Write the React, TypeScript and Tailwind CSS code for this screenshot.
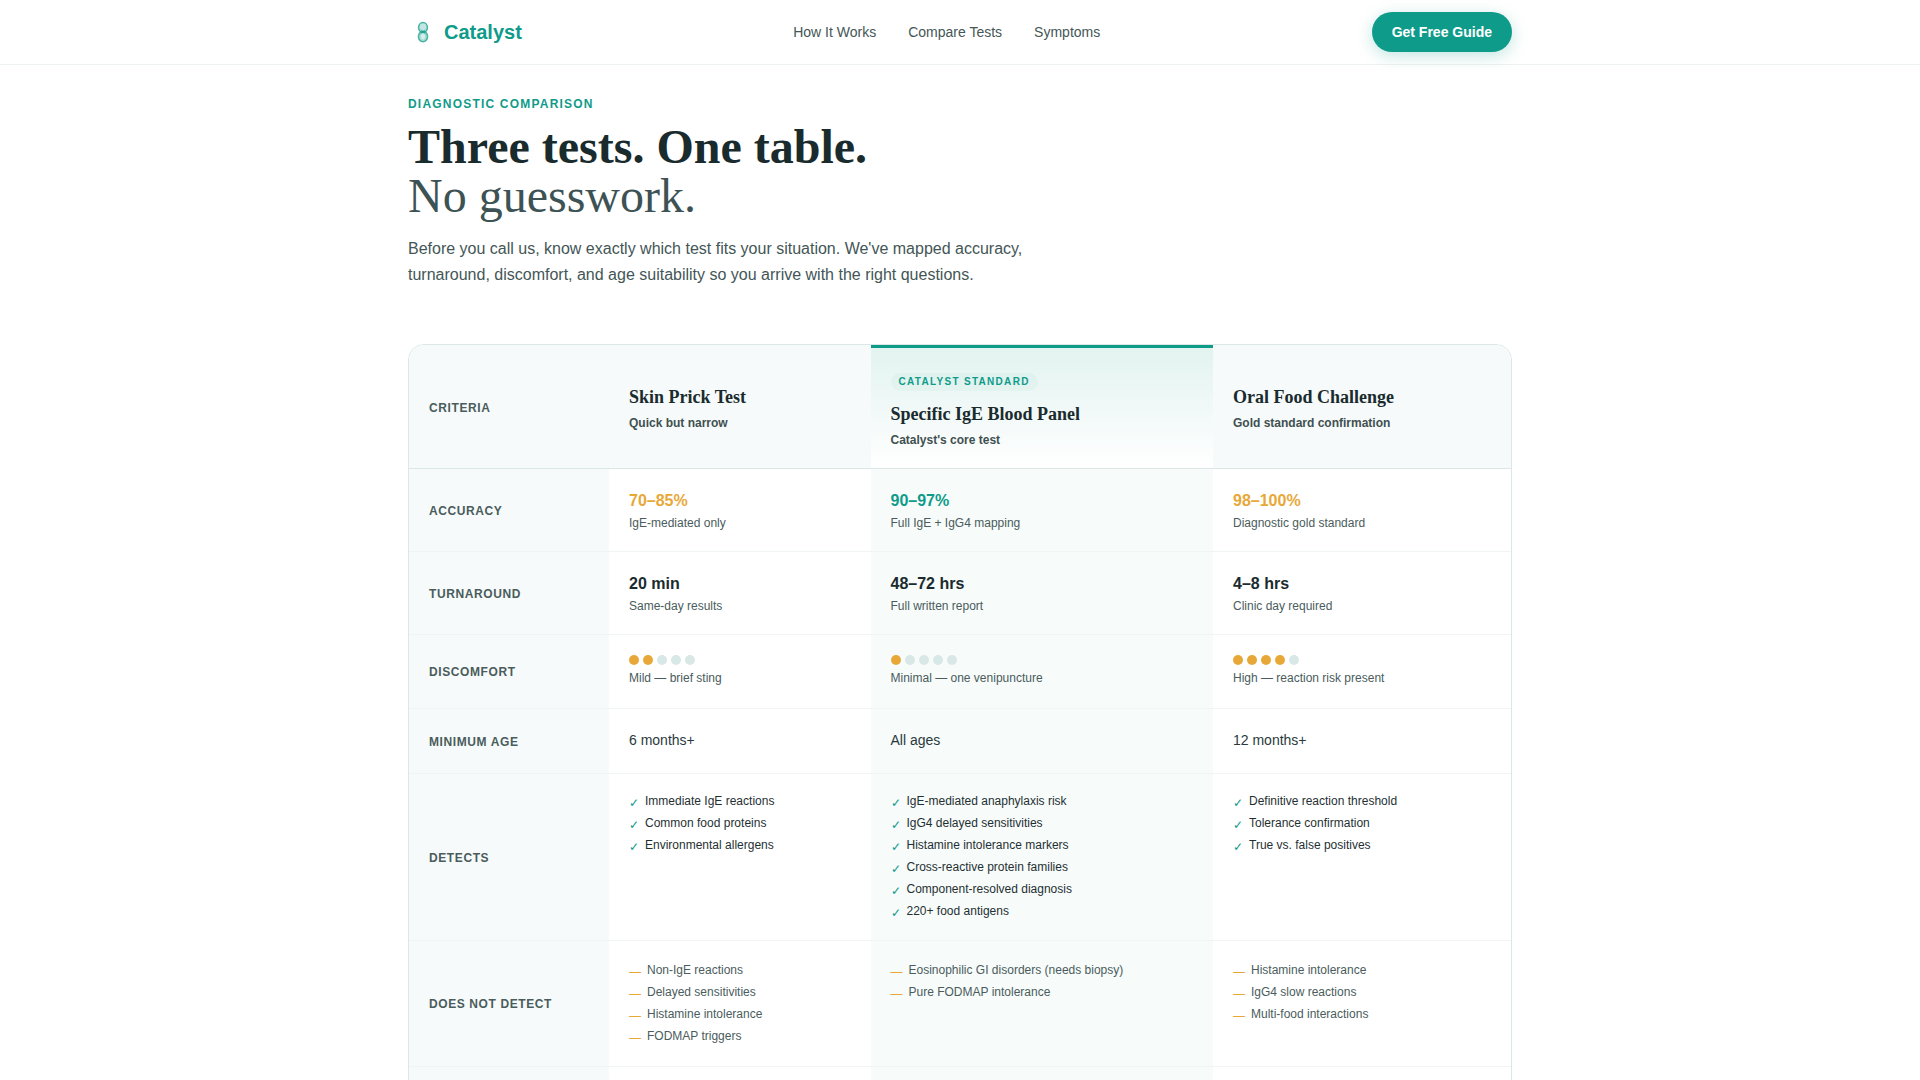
const criteriaLabel = "flex items-center bg-[#f6fafa] px-5 pt-[2px] text-[12px] font-bold uppercase tracking-[0.05em] text-[#4a5c5c]"
const rowLine = "border-b border-[#f0f5f4]"
const cellPad = "px-5"
const highlightBg = "bg-[#f7fbfa] pl-[19.5px]"

type Cell = { value: string; note: string; tone?: string }

const accuracy: Cell[] = [
  { value: '70–85%', note: 'IgE-mediated only', tone: 'text-[#e8a838]' },
  { value: '90–97%', note: 'Full IgE + IgG4 mapping', tone: 'text-[#0f9b8a]' },
  { value: '98–100%', note: 'Diagnostic gold standard', tone: 'text-[#e8a838]' },
]

const turnaround: Cell[] = [
  { value: '20 min', note: 'Same-day results' },
  { value: '48–72 hrs', note: 'Full written report' },
  { value: '4–8 hrs', note: 'Clinic day required' },
]

const discomfort = [
  { level: 2, note: 'Mild — brief sting' },
  { level: 1, note: 'Minimal — one venipuncture' },
  { level: 4, note: 'High — reaction risk present' },
]

const minAge = ['6 months+', 'All ages', '12 months+']

const detects = [
  ['Immediate IgE reactions', 'Common food proteins', 'Environmental allergens'],
  [
    'IgE-mediated anaphylaxis risk',
    'IgG4 delayed sensitivities',
    'Histamine intolerance markers',
    'Cross-reactive protein families',
    'Component-resolved diagnosis',
    '220+ food antigens',
  ],
  ['Definitive reaction threshold', 'Tolerance confirmation', 'True vs. false positives'],
]

const misses = [
  ['Non-IgE reactions', 'Delayed sensitivities', 'Histamine intolerance', 'FODMAP triggers'],
  ['Eosinophilic GI disorders (needs biopsy)', 'Pure FODMAP intolerance'],
  ['Histamine intolerance', 'IgG4 slow reactions', 'Multi-food interactions'],
]

function Logo() {
  return (
    <svg width="14" height="22" viewBox="0 0 14 22" fill="none" className="ml-2">
      <ellipse cx="7" cy="6.5" rx="4.4" ry="5" fill="#0f9b8a" fillOpacity="0.25" stroke="#0f9b8a" strokeOpacity="0.75" strokeWidth="1.5" />
      <ellipse cx="7" cy="15.5" rx="4.6" ry="5.2" fill="#0f9b8a" fillOpacity="0.35" stroke="#0f9b8a" strokeOpacity="0.7" strokeWidth="1.5" />
      <ellipse cx="7" cy="15.5" rx="2" ry="3" fill="#ffffff" fillOpacity="0.5" />
      <path d="M4.5 8.5L9.5 13M9.5 8.5L4.5 13" stroke="#0f9b8a" strokeOpacity="0.6" strokeWidth="1" />
    </svg>
  )
}

function Dots({ level }: { level: number }) {
  return (
    <div className="flex h-4 items-center gap-1">
      {[1, 2, 3, 4, 5].map((n) =>
        n <= level ? (
          <span key={n} className="h-2.5 w-2.5 rounded-full bg-[#e8a838]" />
        ) : (
          <span key={n} className="h-2.5 w-2.5 rounded-full bg-[#d8e8e6]" />
        ),
      )}
    </div>
  )
}

function ValueRow({ label, cells }: { label: string; cells: Cell[] }) {
  return (
    <>
      <div className={`${criteriaLabel} ${rowLine}`}>{label}</div>
      {cells.map((c, i) => (
        <div key={c.value} className={`${cellPad} ${rowLine} pb-[18px] pt-5 ${i === 1 ? highlightBg : ''}`}>
          <div className={`text-[16px] font-bold leading-6 ${c.tone ?? 'text-[#1a2b2e]'}`}>{c.value}</div>
          <div className="text-[12px] leading-5 text-[#4a5c5c]">{c.note}</div>
        </div>
      ))}
    </>
  )
}

function HeaderCell({ name, sub }: { name: string; sub: string }) {
  return (
    <div className="flex flex-col justify-center border-b border-[#dce6e6] bg-[#f6fafa] px-5 pt-[3px]">
      <div className="font-['Liberation_Serif',serif] text-[18px] font-bold leading-[31px] text-[#1a2b2e]">{name}</div>
      <div className="text-[12px] font-bold leading-5 text-[#3f5050]">{sub}</div>
    </div>
  )
}

export default function App() {
  return (
    <div className="h-screen overflow-hidden bg-white font-['Liberation_Sans',Arial,sans-serif] text-[#1a2b2e]">
      <header className="border-b border-[#eef2f2] bg-white">
        <div className="mx-auto flex h-16 max-w-[1200px] items-center justify-between px-12">
          <div className="flex items-center gap-[14px]">
            <Logo />
            <span className="text-[20px] font-bold text-[#0f9b8a]">Catalyst</span>
          </div>
          <nav className="flex items-center gap-8 text-[14px] text-[#445656]">
            <a>How It Works</a>
            <a>Compare Tests</a>
            <a>Symptoms</a>
          </nav>
          <button className="h-10 rounded-full bg-[#0f9b8a] px-5 text-[14px] font-bold text-white shadow-[0_4px_16px_rgba(15,155,138,0.25)]">
            Get Free Guide
          </button>
        </div>
      </header>

      <main className="mx-auto max-w-[1200px] px-12">
        <section className="pt-[29px]">
          <div className="text-[12px] font-bold uppercase leading-5 tracking-[0.1em] text-[#0f9b8a]">Diagnostic Comparison</div>
          <h1 className="mt-[8px] font-['Liberation_Serif',serif] text-[48px] leading-[49px] text-[#1a2b2e]">
            <span className="block font-bold">Three tests. One table.</span>
            <span className="block font-normal text-[#3d5254]">No guesswork.</span>
          </h1>
          <p className="mt-[16px] max-w-[640px] text-[16px] leading-[26.4px] text-[#445656]">
            Before you call us, know exactly which test fits your situation. We've mapped accuracy, turnaround, discomfort, and age suitability so you arrive with the right questions.
          </p>
        </section>

        <div className="mt-[55px] grid grid-cols-[200px_262px_342px_1fr] overflow-hidden rounded-2xl border border-[#dce8e6]">
          <div className={`${criteriaLabel} border-b !border-[#dce6e6] !pt-1`}>Criteria</div>
          <HeaderCell name="Skin Prick Test" sub="Quick but narrow" />
          <div className="flex flex-col items-start border-b border-t-[3px] border-b-[#dce6e6] border-t-[#0f9b8a] bg-gradient-to-b from-[#e2f3f0] to-white pb-[18px] pl-[19.5px] pr-5 pt-[25px]">
            <span className="mb-[8px] rounded-full bg-[#0f9b8a]/[0.04] px-2 text-[10px] font-bold uppercase leading-[18px] tracking-[0.13em] text-[#0f9b8a]">
              Catalyst Standard
            </span>
            <div className="font-['Liberation_Serif',serif] text-[18px] font-bold leading-[31px] text-[#1a2b2e]">Specific IgE Blood Panel</div>
            <div className="text-[12px] font-bold leading-5 text-[#3f5050]">Catalyst's core test</div>
          </div>
          <HeaderCell name="Oral Food Challenge" sub="Gold standard confirmation" />

          <ValueRow label="Accuracy" cells={accuracy} />
          <ValueRow label="Turnaround" cells={turnaround} />

          <div className={`${criteriaLabel} ${rowLine}`}>Discomfort</div>
          {discomfort.map((d, i) => (
            <div key={d.note} className={`${cellPad} ${rowLine} pb-5 pt-[17px] ${i === 1 ? highlightBg : ''}`}>
              <Dots level={d.level} />
              <div className="text-[12px] leading-5 text-[#4a5c5c]">{d.note}</div>
            </div>
          ))}

          <div className={`${criteriaLabel} ${rowLine}`}>Minimum Age</div>
          {minAge.map((age, i) => (
            <div key={age} className={`${cellPad} ${rowLine} pb-[21px] pt-[19px] text-[14px] leading-6 text-[#2a3a3c] ${i === 1 ? highlightBg : ''}`}>
              {age}
            </div>
          ))}

          <div className={`${criteriaLabel} ${rowLine}`}>Detects</div>
          {detects.map((items, i) => (
            <div key={items[0]} className={`${cellPad} ${rowLine} pb-[19px] pt-[17px] ${i === 1 ? highlightBg : ''}`}>
              <ul className="flex flex-col gap-[2px]">
                {items.map((item) => (
                  <li key={item} className="flex h-5 gap-1 text-[12px] leading-5 text-[#1f3033]">
                    <span className="mt-[2px] w-3 text-[#0f9b8a]">✓</span>
                    {item}
                  </li>
                ))}
              </ul>
            </div>
          ))}

          <div className={`${criteriaLabel} ${rowLine}`}>Does Not Detect</div>
          {misses.map((items, i) => (
            <div key={items[0]} className={`${cellPad} ${rowLine} pb-5 pt-[19px] ${i === 1 ? highlightBg : ''}`}>
              <ul className="flex flex-col gap-[2px]">
                {items.map((item) => (
                  <li key={item} className="flex h-5 gap-[6px] text-[12px] leading-5 text-[#4a5c5c]">
                    <span className="mt-[2px] w-3 text-[#e8a838]">—</span>
                    {item}
                  </li>
                ))}
              </ul>
            </div>
          ))}

          <div className="h-16 bg-[#f6fafa]" />
          <div className="h-16" />
          <div className={`h-16 ${highlightBg}`} />
          <div className="h-16" />
        </div>
      </main>
    </div>
  )
}
